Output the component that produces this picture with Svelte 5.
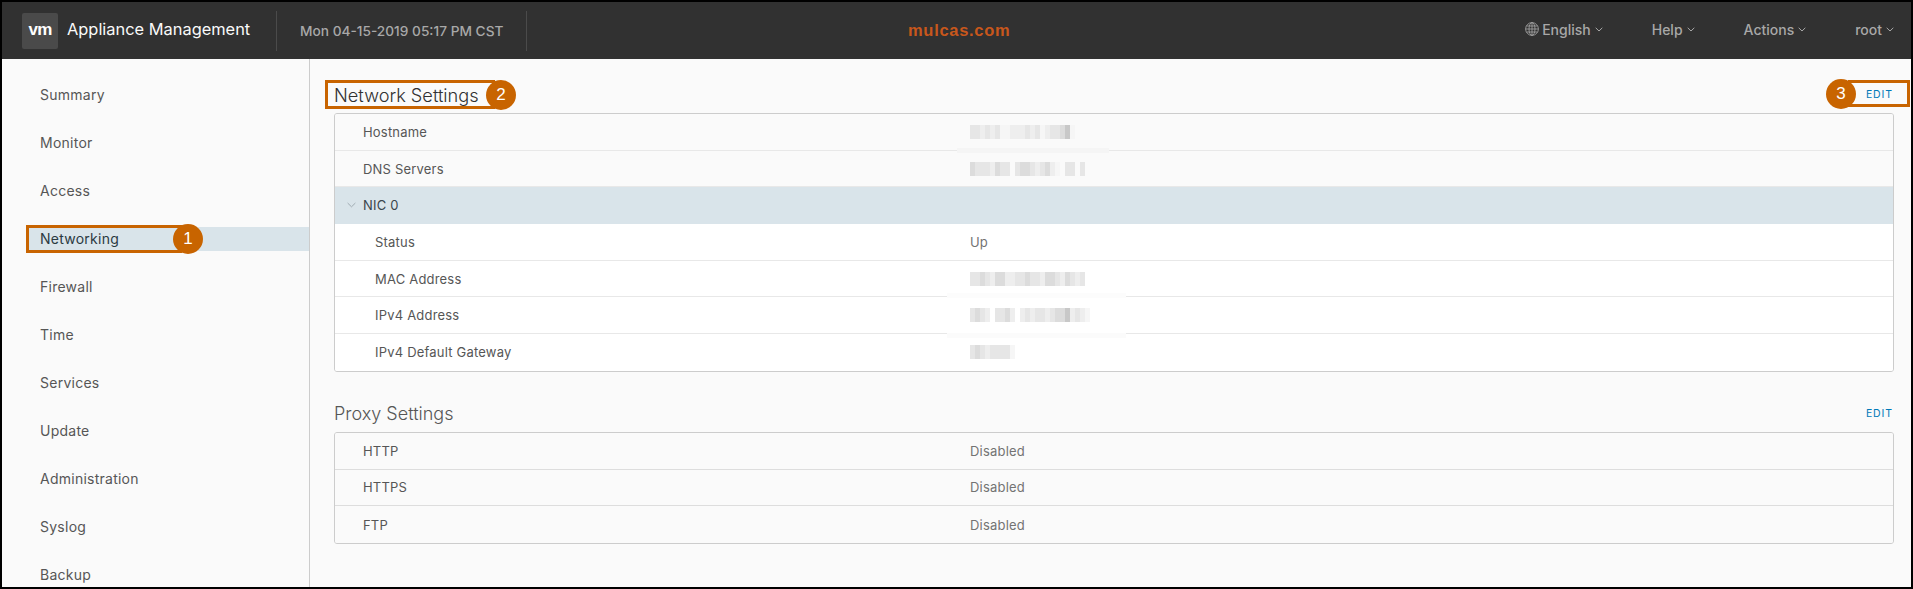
<script>
  const nav = ['Summary','Monitor','Access','Networking','Firewall','Time','Services','Update','Administration','Syslog','Backup'];
  const shade = (c) => ({ a:'#f6f6f6', b:'#eeeeee', c:'#e6e6e6', d:'#dcdcdc', e:'#c8c8c8', ' ':'transparent' }[c]);
  const network = [
    { label:'Hostname', mosaic:'ccbcbcaabbbcbcabccdea' },
    { label:'DNS Servers', mosaic:'dcccbdcc cddcbcdba cc c' },
    { nic:true, label:'NIC 0' },
    { label:'Status', value:'Up', nested:true },
    { label:'MAC Address', mosaic:'ccdcbddbbccdccbddcbdcbc' },
    { label:'IPv4 Address', mosaic:'cdcb ccdb bcbccbcddebcba' },
    { label:'IPv4 Default Gateway', mosaic:'cdcbcccca' }
  ].map((r, i) => (i > 3 ? { ...r, nested: true } : r));
  const proxy = [['HTTP','Disabled'],['HTTPS','Disabled'],['FTP','Disabled']];
</script>

<div class="frame">
  <header class="top">
    <div class="logo">vm</div>
    <div class="title">Appliance Management</div>
    <div class="date">Mon 04-15-2019 05:17 PM CST</div>
    <div class="brand">mulcas.com</div>
    <nav class="menus">
      <span class="menu lang">
        <svg class="globe" viewBox="0 0 14 14" width="14" height="14" fill="none" stroke="#a8a8a8" stroke-width=".8">
          <circle cx="7" cy="7" r="6.4"/><ellipse cx="7" cy="7" rx="3" ry="6.4"/><path d="M7 .6v12.8M.6 7h12.8M1.4 4h11.2M1.4 10h11.2"/>
        </svg>English<svg class="chev" viewBox="0 0 8 5" width="8" height="5" fill="none" stroke="#a8a8a8"><path d="M.7.8 4 4l3.3-3.2"/></svg>
      </span>
      <span class="menu">Help<svg class="chev" viewBox="0 0 8 5" width="8" height="5" fill="none" stroke="#a8a8a8"><path d="M.7.8 4 4l3.3-3.2"/></svg></span>
      <span class="menu">Actions<svg class="chev" viewBox="0 0 8 5" width="8" height="5" fill="none" stroke="#a8a8a8"><path d="M.7.8 4 4l3.3-3.2"/></svg></span>
      <span class="menu">root<svg class="chev" viewBox="0 0 8 5" width="8" height="5" fill="none" stroke="#a8a8a8"><path d="M.7.8 4 4l3.3-3.2"/></svg></span>
    </nav>
  </header>

  <div class="body">
    <aside class="side">
      {#each nav as item}
        <div class="item" class:active={item === 'Networking'}>{item}</div>
      {/each}
    </aside>

    <main class="main">
      <div class="head">
        <h2>Network Settings</h2>
        <span class="edit">EDIT</span>
      </div>
      <div class="card">
        {#each network as r}
          <div class="row" class:nic={r.nic} class:nested={r.nested}>
            <div class="label">
              {#if r.nic}
                <svg class="nicchev" viewBox="0 0 10 6" width="9" height="6" fill="none" stroke="#9aa5ab"><path d="M.7.8 5 5l4.3-4.2"/></svg>
              {/if}
              {r.label}
            </div>
            {#if r.value}
              <div class="value">{r.value}</div>
            {:else if r.mosaic}
              <div class="mosaic">
                {#each r.mosaic.split('') as c}
                  <i style:background={shade(c)}></i>
                {/each}
              </div>
            {/if}
          </div>
        {/each}
      </div>

      <div class="head second">
        <h2>Proxy Settings</h2>
        <span class="edit">EDIT</span>
      </div>
      <div class="card">
        {#each proxy as p}
          <div class="row proxy">
            <div class="label">{p[0]}</div>
            <div class="value">{p[1]}</div>
          </div>
        {/each}
      </div>
    </main>
  </div>

  <div class="patch p1"></div>
  <div class="patch p2"></div>
  <div class="patch p3"></div>

  <div class="box b1"></div>
  <div class="box b2"></div>
  <div class="box b3"></div>
  <div class="badge n1">1</div>
  <div class="badge n2">2</div>
  <div class="badge n3">3</div>
</div>

<style>
  :global(body) { margin: 0; background: #000; }
  .frame {
    position: relative;
    box-sizing: border-box;
    width: 1913px;
    height: 589px;
    border: 2px solid #000;
    background: #fafafa;
    overflow: hidden;
    display: flex;
    flex-direction: column;
    font-family: Inter, "Noto Sans", sans-serif;
    color: #565656;
  }
  .top {
    flex: 0 0 57px;
    display: flex;
    align-items: center;
    background: #313131;
    color: #fff;
  }
  .logo {
    flex: 0 0 36px;
    height: 36px;
    margin: 0 9px 0 20px;
    border-radius: 2px;
    background: #4a4a4a;
    color: #fff;
    font: 700 17px/33px "Liberation Sans", sans-serif;
    letter-spacing: -.8px;
    text-align: center;
  }
  .title {
    flex: 0 0 209px;
    height: 40px;
    border-right: 1px solid #4b4b4b;
    font-size: 16.4px;
    line-height: 37px;
    color: #fafafa;
    white-space: nowrap;
  }
  .date {
    flex: 0 0 226px;
    height: 40px;
    padding-left: 23px;
    border-right: 1px solid #4b4b4b;
    font-size: 13.7px;
    font-weight: 500;
    line-height: 40px;
    color: #a8a8a8;
    white-space: nowrap;
  }
  .brand {
    margin: 0 0 1px 381px;
    font: 700 16.5px "Liberation Sans", sans-serif;
    letter-spacing: .7px;
    color: #c8571c;
  }
  .menus {
    margin-left: auto;
    margin-bottom: 3px;
    display: flex;
    align-items: center;
    padding-right: 17px;
    font-size: 14px;
    font-weight: 500;
    color: #a8a8a8;
  }
  .menu { display: flex; align-items: center; white-space: nowrap; margin-left: 49px; }
  .lang { margin-left: 0; }
  .globe { margin-right: 3px; }
  .chev { margin-left: 4px; margin-top: 1px; }
  .body { flex: 1; display: flex; min-height: 0; }
  .side {
    flex: 0 0 308px;
    box-sizing: border-box;
    padding-top: 24px;
    border-right: 1px solid #ccc;
    display: flex;
    flex-direction: column;
    gap: 24px;
  }
  .item {
    flex: 0 0 24px;
    padding-left: 38px;
    font-size: 14px;
    letter-spacing: .25px;
    line-height: 24px;
    color: #565656;
  }
  .active { margin-left: 24px; padding-left: 14px; background: #d9e4ea; color: #2b3a42; }
  .main { flex: 1; padding: 0 17px 0 24px; min-width: 0; }
  .head {
    height: 54px;
    display: flex;
    align-items: flex-end;
    justify-content: space-between;
  }
  .second { height: 60px; }
  h2 {
    margin: 0 0 3px;
    font-size: 18.2px;
    font-weight: 300;
    line-height: 30px;
    color: #313131;
  }
  .second h2 { margin-bottom: 3px; font-size: 18px; color: #565656; }
  .edit {
    margin: 0 1px 11px 0;
    font-size: 10.5px;
    letter-spacing: .9px;
    line-height: 14px;
    color: #0079b8;
  }
  .card {
    border: 1px solid #ccc;
    border-radius: 3px;
    overflow: hidden;
  }
  .row {
    box-sizing: border-box;
    height: 36.7px;
    display: flex;
    align-items: center;
    border-bottom: 1px solid #e8e8e8;
    background: #fafafa;
    font-size: 13px;
  }
  .row:last-child { border-bottom: 0; }
  .proxy { border-bottom-color: #ddd; }
  .label {
    position: relative;
    flex: 0 0 635px;
    box-sizing: border-box;
    padding-left: 28px;
    letter-spacing: .2px;
    color: #565656;
  }
  .nested { background: #fff; }
  .nested .label { padding-left: 40px; }
  .nic { background: #d9e4ea; border-bottom-color: #d9e4ea; }
  .nic .label { color: #3a464c; }
  .nicchev { position: absolute; left: 12px; top: 5px; }
  .value { letter-spacing: .2px; color: #737373; }
  .mosaic { display: flex; height: 14px; }
  .mosaic i { width: 5px; height: 100%; }

  .patch { position: absolute; height: 5px; }
  .p1 { left: 955px; width: 152px; top: 146px; background: #f5f5f5; }
  .p2 { left: 945px; width: 179px; top: 291px; background: #fcfcfc; }
  .p3 { left: 945px; width: 179px; top: 331px; background: #fbfbfb; }

  .box { position: absolute; box-sizing: border-box; border: 3px solid #c86400; }
  .b1 { left: 24px; top: 223px; width: 156px; height: 28px; }
  .b2 { left: 323px; top: 78px; width: 170px; height: 29px; }
  .b3 { left: 1846px; top: 78px; width: 62px; height: 27px; }
  .badge {
    position: absolute;
    box-sizing: border-box;
    width: 30px;
    height: 30px;
    border-radius: 50%;
    background: #c86400;
    color: #fff;
    font: 400 17px/30px "Liberation Sans", sans-serif;
    text-align: center;
  }
  .n1 { left: 171px; top: 222px; }
  .n2 { left: 484px; top: 78px; }
  .n3 { left: 1824px; top: 77px; }
</style>
